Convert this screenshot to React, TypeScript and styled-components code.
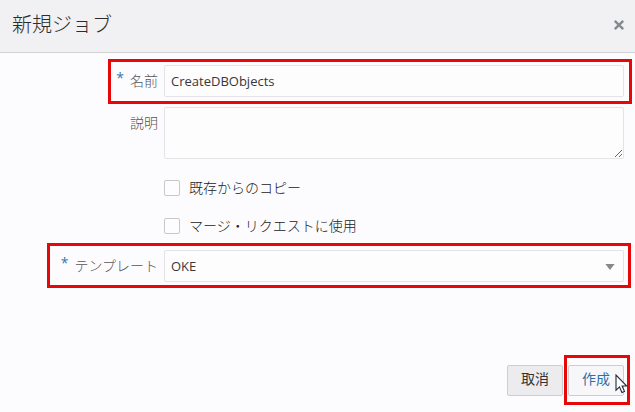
import React from "react";
import styled, { createGlobalStyle, css } from "styled-components";

const GlobalStyle = createGlobalStyle`
  *, *::before, *::after { box-sizing: border-box; }
  body {
    margin: 0;
    background: #fcfcfe;
    color: #383838;
    font: 14px/20px "Open Sans", "Noto Sans CJK JP", sans-serif;
  }
  button, input, select, textarea { font: inherit; color: inherit; margin: 0; }
`;

const Dialog = styled.div`
  width: 100%;
`;

const Header = styled.header`
  display: flex;
  align-items: center;
  justify-content: space-between;
  height: 53px;
  padding: 0 10px 2px 12px;
  background: #f1f1f3;
  border-bottom: 1px solid #d3d3d5;
`;

const Title = styled.h1`
  margin: 0;
  color: #2c2c2c;
  font-size: 20px;
  line-height: 28px;
  font-weight: 300;
`;

const CloseButton = styled.button`
  display: flex;
  padding: 0;
  border: 0;
  background: none;
  color: #858a8e;
`;

const Form = styled.form`
  display: block;
  padding: 12px 11px 0 0;
`;

const Row = styled.div<{ $gap?: number }>`
  position: relative;
  display: grid;
  grid-template-columns: 158px minmax(0, 1fr);
  column-gap: 6px;
  margin-bottom: ${(p) => p.$gap ?? 10}px;
`;

const Label = styled.label`
  padding-top: 6px;
  text-align: right;
  color: #555;
  font-weight: 300;
`;

const Required = styled.span`
  margin-right: 6px;
  color: #3a76b0;
  font-weight: 400;
  line-height: 14px;
  vertical-align: 3px;
`;

const field = css`
  display: block;
  width: 100%;
  border: 1px solid #e4e4e6;
  border-radius: 2px;
  background: #fdfdfe;
  padding: 0 6px;
  outline: 0;
`;

const TextInput = styled.input`
  ${field}
  height: 32px;
  font-size: 13px;
`;

const TextArea = styled.textarea`
  ${field}
  height: 52px;
  resize: both;
`;

const SelectWrap = styled.div`
  position: relative;
`;

const Select = styled.select`
  ${field}
  height: 32px;
  appearance: none;
  font-size: 13px;
`;

const Arrow = styled.svg`
  position: absolute;
  right: 9px;
  top: 14px;
  pointer-events: none;
`;

const CheckLabel = styled.label`
  display: flex;
  grid-column: 2;
  align-items: center;
  gap: 9px;
  height: 20px;
  color: #222;
  font-weight: 300;
`;

const Checkbox = styled.input`
  appearance: none;
  width: 16px;
  height: 16px;
  border: 1px solid #c8c8ca;
  border-radius: 2px;
  background: #fdfdfe;
`;

const Highlight = styled.span<{ $inset: string }>`
  position: absolute;
  inset: ${(p) => p.$inset};
  border: 3px solid #e60708;
  pointer-events: none;
`;

const Footer = styled.footer`
  display: flex;
  justify-content: flex-end;
  gap: 5px;
  padding: 83px 0 15px;
`;

const ActionWrap = styled.div`
  position: relative;
`;

const Button = styled.button<{ $primary?: boolean }>`
  width: 56px;
  height: 31px;
  padding: 0 0 3px;
  border: 1px solid #cdced0;
  border-radius: 2px;
  background: ${(p) => (p.$primary ? "#f7f7f9" : "#ececee")};
  color: ${(p) => (p.$primary ? "#2f70a8" : "#333")};
`;

const Cursor = styled.svg`
  position: absolute;
  left: 47px;
  top: 9px;
  pointer-events: none;
`;

export default function App() {
  return (
    <Dialog role="dialog" aria-labelledby="dialog-title">
      <GlobalStyle />
      <Header>
        <Title id="dialog-title">新規ジョブ</Title>
        <CloseButton type="button" aria-label="閉じる">
          <svg width="12" height="12" viewBox="0 0 12 12" fill="none" stroke="currentColor" strokeWidth="2.4">
            <path d="M1.8 1.8l8.4 8.4M10.2 1.8l-8.4 8.4" />
          </svg>
        </CloseButton>
      </Header>
      <Form onSubmit={(e) => e.preventDefault()}>
        <Row>
          <Label htmlFor="job-name">
            <Required>*</Required>名前
          </Label>
          <TextInput id="job-name" defaultValue="CreateDBObjects" required spellCheck={false} />
          <Highlight $inset="-6px -8px -7px 108px" />
        </Row>
        <Row $gap={19}>
          <Label htmlFor="job-description">説明</Label>
          <TextArea id="job-description" />
        </Row>
        <Row $gap={18}>
          <CheckLabel>
            <Checkbox type="checkbox" />
            既存からのコピー
          </CheckLabel>
        </Row>
        <Row $gap={14}>
          <CheckLabel>
            <Checkbox type="checkbox" />
            マージ・リクエストに使用
          </CheckLabel>
        </Row>
        <Row $gap={0}>
          <Label htmlFor="job-template">
            <Required>*</Required>テンプレート
          </Label>
          <SelectWrap>
            <Select id="job-template" defaultValue="OKE" required>
              <option>OKE</option>
            </Select>
            <Arrow width="10" height="6" viewBox="0 0 10 6" fill="#85898c">
              <path d="M0.4 0h9.2L5 6z" />
            </Arrow>
          </SelectWrap>
          <Highlight $inset="-7px -7px -6px 47px" />
        </Row>
        <Footer>
          <Button type="button">取消</Button>
          <ActionWrap>
            <Button type="submit" $primary>
              作成
            </Button>
            <Highlight $inset="-10px -6px -9px -4px" />
            <Cursor width="13" height="20" viewBox="0 0 13 20">
              <path
                d="M1 1v15.2l3.5-3.3 2.4 5.6 2.6-1.1-2.4-5.4h4.7z"
                fill="#fff"
                stroke="#222a38"
                strokeWidth="1.1"
              />
            </Cursor>
          </ActionWrap>
        </Footer>
      </Form>
    </Dialog>
  );
}
